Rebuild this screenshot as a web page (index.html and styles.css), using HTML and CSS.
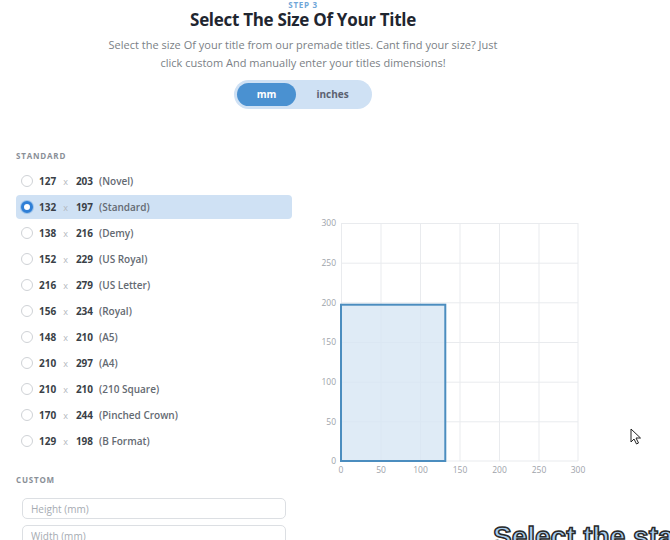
FILE: index.html
```html
<!DOCTYPE html>
<html lang="en">

<head>
    <meta charset="UTF-8">
    <meta name="viewport" content="width=device-width, initial-scale=1.0">
    <title>Step 3 - Title size</title>
    <link rel="stylesheet" href="styles.css">
</head>

<body>
    <div class="head">
        <div class="step">Step 3</div>
        <h1 class="title">Select The Size Of Your Title</h1>
        <p class="sub">Select the size Of your title from our premade titles. Cant find your size? Just<br>
            click custom And manually enter your titles dimensions!</p>
        <div class="toggle">
            <span class="tgl on">mm</span>
            <span class="tgl">inches</span>
        </div>
    </div>

    <div class="main">
        <div class="left">
            <div class="lbl">Standard</div>
            <ul class="sizes">
                <li class="row"><span class="rad"></span><b>127</b><i>x</i><b>203</b><em>(Novel)</em></li>
                <li class="row sel"><span class="rad"></span><b>132</b><i>x</i><b>197</b><em>(Standard)</em></li>
                <li class="row"><span class="rad"></span><b>138</b><i>x</i><b>216</b><em>(Demy)</em></li>
                <li class="row"><span class="rad"></span><b>152</b><i>x</i><b>229</b><em>(US Royal)</em></li>
                <li class="row"><span class="rad"></span><b>216</b><i>x</i><b>279</b><em>(US Letter)</em></li>
                <li class="row"><span class="rad"></span><b>156</b><i>x</i><b>234</b><em>(Royal)</em></li>
                <li class="row"><span class="rad"></span><b>148</b><i>x</i><b>210</b><em>(A5)</em></li>
                <li class="row"><span class="rad"></span><b>210</b><i>x</i><b>297</b><em>(A4)</em></li>
                <li class="row"><span class="rad"></span><b>210</b><i>x</i><b>210</b><em>(210 Square)</em></li>
                <li class="row"><span class="rad"></span><b>170</b><i>x</i><b>244</b><em>(Pinched Crown)</em></li>
                <li class="row"><span class="rad"></span><b>129</b><i>x</i><b>198</b><em>(B Format)</em></li>
            </ul>
            <div class="lbl custom">Custom</div>
            <input class="ipt" type="text" placeholder="Height (mm)">
            <input class="ipt" type="text" placeholder="Width (mm)">
        </div>

        <svg class="chart" width="280" height="270" viewBox="0 0 280 270">
            <g stroke="#e9ebee" stroke-width="1">
                <line x1="21" y1="10.5" x2="258" y2="10.5" />
                <line x1="21" y1="50.2" x2="258" y2="50.2" />
                <line x1="21" y1="89.8" x2="258" y2="89.8" />
                <line x1="21" y1="129.5" x2="258" y2="129.5" />
                <line x1="21" y1="169.2" x2="258" y2="169.2" />
                <line x1="21" y1="208.8" x2="258" y2="208.8" />
                <line x1="21" y1="248" x2="258" y2="248" />
                <line x1="21.5" y1="10" x2="21.5" y2="248" />
                <line x1="61" y1="10" x2="61" y2="248" />
                <line x1="100.5" y1="10" x2="100.5" y2="248" />
                <line x1="140" y1="10" x2="140" y2="248" />
                <line x1="179.5" y1="10" x2="179.5" y2="248" />
                <line x1="219" y1="10" x2="219" y2="248" />
                <line x1="258" y1="10" x2="258" y2="248" />
            </g>
            <rect x="21" y="91.7" width="104.3" height="156.3" fill="#d7e6f4" fill-opacity="0.8" stroke="#4b8dbf" stroke-width="2" />
            <g class="ax" text-anchor="end">
                <text x="16" y="13">300</text>
                <text x="16" y="53">250</text>
                <text x="16" y="93">200</text>
                <text x="16" y="132">150</text>
                <text x="16" y="172">100</text>
                <text x="16" y="212">50</text>
                <text x="16" y="251">0</text>
            </g>
            <g class="ax" text-anchor="middle">
                <text x="21" y="260">0</text>
                <text x="61" y="260">50</text>
                <text x="100.5" y="260">100</text>
                <text x="140" y="260">150</text>
                <text x="179.5" y="260">200</text>
                <text x="219" y="260">250</text>
                <text x="258" y="260">300</text>
            </g>
        </svg>
    </div>

    <!-- pointer and caption from the recording -->
    <svg class="cursor" width="12" height="17" viewBox="0 0 12 17">
        <path d="M1 1 L1 14 L4 11 L6.5 16 L8.5 15 L6 10 L10.5 10 Z" fill="#fff" stroke="#222" stroke-width="1" stroke-linejoin="round" />
    </svg>
    <div class="caption">Select the standard size</div>
</body>

</html>
```

FILE: styles.css
```css
body {
    margin: 0;
    font-family: "Open Sans", "Noto Sans", sans-serif;
    color: #2b2f36;
    background: #fff;
    width: 670px;
    height: 540px;
    overflow: hidden;
    position: relative;
}

.head {
    width: 606px;
    text-align: center;
}

.step {
    font-size: 8px;
    line-height: 9px;
    font-weight: 700;
    color: #6fa6d8;
    text-transform: uppercase;
    letter-spacing: 0.7px;
}

.title {
    margin: 2px 0 0;
    font-size: 17px;
    line-height: 18px;
    font-weight: 700;
    letter-spacing: -0.3px;
    color: #1f2630;
}

.sub {
    margin: 7px 0 0;
    font-size: 11px;
    line-height: 18px;
    color: #7b7f86;
}

.toggle {
    display: inline-flex;
    margin-top: 8px;
    width: 138px;
    height: 29px;
    box-sizing: border-box;
    padding: 3px;
    border-radius: 15px;
    background: #cfe1f4;
}

.tgl {
    flex: 1;
    font-size: 10px;
    font-weight: 700;
    line-height: 23px;
    color: #5b6270;
}

.tgl.on {
    flex: 0 0 59px;
    border-radius: 12px;
    background: #4a91d1;
    color: #fff;
}

.main {
    display: flex;
    margin-top: 42px;
}

.left {
    width: 276px;
    margin-left: 16px;
}

.lbl {
    font-size: 8px;
    line-height: 10px;
    font-weight: 700;
    color: #8a8f97;
    letter-spacing: 0.8px;
    text-transform: uppercase;
}

.sizes {
    list-style: none;
    margin: 8px 0 0;
    padding: 0;
}

.row {
    display: flex;
    align-items: center;
    height: 24px;
    margin-bottom: 2px;
    padding-left: 5px;
    border-radius: 4px;
    font-size: 10px;
}

.row.sel {
    background: #cfe1f4;
}

.rad {
    width: 10px;
    height: 10px;
    border: 1px solid #cfd2d6;
    border-radius: 50%;
    background: #fff;
    margin-right: 6px;
}

.sel .rad {
    width: 6px;
    height: 6px;
    border: 3px solid #2f7fd6;
    box-shadow: 0 0 0 1px #9cc3ea;
}

.row b {
    font-weight: 700;
    color: #3a3f47;
}

.row i {
    font-style: normal;
    color: #b3b7bd;
    font-size: 9px;
    margin: 0 8px 0 7px;
}

.row em {
    font-style: normal;
    font-weight: 600;
    color: #646a72;
    margin-left: 6px;
}

.custom {
    margin-top: 22px;
}

.ipt {
    display: block;
    box-sizing: border-box;
    width: 264px;
    height: 21px;
    margin: 0 0 6px 6px;
    padding: 0 8px;
    border: 1px solid #dcdfe3;
    border-radius: 5px;
    font-family: "Open Sans", "Noto Sans", sans-serif;
    font-size: 10px;
    color: #333;
}

.left .custom + .ipt {
    margin-top: 13px;
}

.ipt::placeholder {
    color: #a6abb2;
}

.chart {
    margin: 62px 0 0 28px;
}

.ax {
    font-family: "Open Sans", "Noto Sans", sans-serif;
    font-size: 8.5px;
    fill: #9ea3aa;
}

.cursor {
    position: absolute;
    left: 630px;
    top: 428px;
}

.caption {
    position: absolute;
    left: 493px;
    top: 523px;
    white-space: nowrap;
    font-family: "Liberation Sans", Arial, sans-serif;
    font-size: 28px;
    line-height: 28px;
    font-weight: 700;
    color: #a9cef0;
    -webkit-text-stroke: 1.5px #2a2a2a;
}
```
